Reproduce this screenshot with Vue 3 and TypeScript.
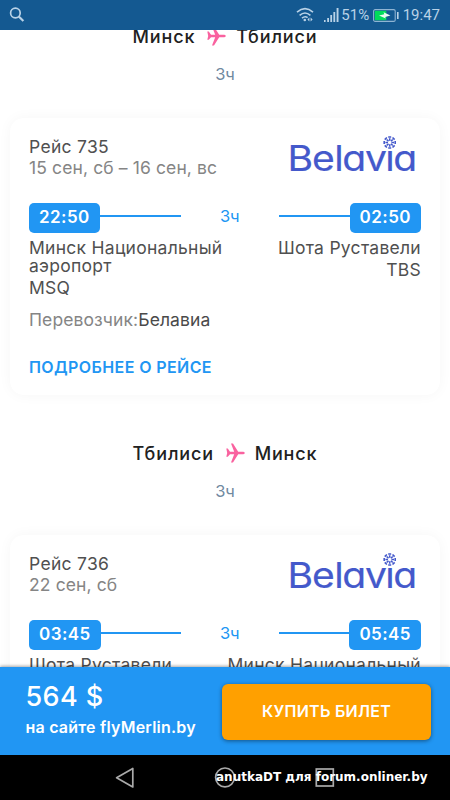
<script setup lang="ts">
interface Flight {
  from: string
  to: string
  number: string
  dates: string
  depart: string
  arrive: string
  origin: string
  originCode: string
  target: string
  targetCode: string
}

const flights: Flight[] = [
  {
    from: 'Минск', to: 'Тбилиси', number: 'Рейс 735', dates: '15 сен, сб – 16 сен, вс',
    depart: '22:50', arrive: '02:50',
    origin: 'Минск Национальный аэропорт', originCode: 'MSQ',
    target: 'Шота Руставели', targetCode: 'TBS',
  },
  {
    from: 'Тбилиси', to: 'Минск', number: 'Рейс 736', dates: '22 сен, сб',
    depart: '03:45', arrive: '05:45',
    origin: 'Шота Руставели', originCode: 'TBS',
    target: 'Минск Национальный аэропорт', targetCode: 'MSQ',
  },
]

const spokes = [0, 45, 90, 135, 180, 225, 270, 315]
</script>

<template>
  <div class="phone">
    <header class="status">
      <svg class="search" width="16" height="16" viewBox="0 0 16 16">
        <circle cx="6.4" cy="6" r="4.8" fill="none" stroke="#b9d2e7" stroke-width="1.7" />
        <path d="M9.8 9.5 14.4 14" stroke="#b9d2e7" stroke-width="2.2" />
      </svg>
      <div class="indicators">
        <svg width="18" height="16" viewBox="0 0 18 16" fill="none" stroke="#b9d2e7" stroke-width="1.6">
          <path d="M1 5.2Q9 -1.8 17 5.2M3.6 8.4Q9 3.6 14.4 8.4M6 11.2Q9 8.6 11.6 10.6" />
          <circle cx="8.8" cy="13" r="1.3" fill="#b9d2e7" stroke="none" />
          <path d="M13.4 10.6 11.4 12.6 13.4 14.6zM14.6 10.6 16.6 12.6 14.6 14.6z" fill="#b9d2e7" stroke="none" />
        </svg>
        <svg class="signal" width="15" height="14" viewBox="0 0 15 14" fill="#b9d2e7">
          <path d="M0 12h1.6v2H0zM3.2 10h1.8v4H3.2zM6.3 7h1.8v7H6.3zM9.4 4h1.8v10H9.4zM12.6 0h1.9v14h-1.9z" />
        </svg>
        <span class="percent">51%</span>
        <svg class="battery" width="26" height="13" viewBox="0 0 26 13">
          <rect x=".6" y=".6" width="21.6" height="11.8" rx="1.5" fill="none" stroke="#8fb4d3" stroke-width="1.1" />
          <rect x="1.8" y="1.8" width="11.5" height="9.4" fill="#00dc5a" />
          <path d="M6 6.6 11.3 5.2 10.6 3.2 17.4 6.4 12.2 7.9 12.8 9.6z" fill="#eafaf2" />
          <rect x="24" y="3" width="1.6" height="7" fill="#b9d2e7" />
        </svg>
        <span class="clock">19:47</span>
      </div>
    </header>

    <main class="content">
      <section v-for="f in flights" :key="f.number" class="leg">
        <h2 class="route">
          <span>{{ f.from }}</span>
          <svg class="plane" width="19" height="20" viewBox="0 0 19 20">
            <path
              d="M.3 5.6H1.8L4 8.8H8.2L5 .6H7L12.2 8.8H17.4Q18.8 9 18.8 10T17.4 11.2H12.2L7 19.4H5L8.2 11.2H4L1.8 13.8H.3L1.2 10z"
              fill="#f9629f"
            />
          </svg>
          <span>{{ f.to }}</span>
        </h2>
        <p class="total">3ч</p>

        <article class="card">
          <div class="top">
            <div>
              <div class="number">{{ f.number }}</div>
              <div class="dates">{{ f.dates }}</div>
            </div>
            <svg class="logo" width="132" height="44" viewBox="0 0 132 44">
              <text
                x="0.4 22.8 42.9 50.2 70.8 89.4 96.7"
                y="40.4"
                transform="scale(1.1 1)"
                class="brand"
              >Belavia</text>
              <circle cx="102.7" cy="12" r="7.5" fill="#fff" />
              <g stroke="#4459cb" stroke-width="1.6" fill="none">
                <g v-for="a in spokes" :key="a" :transform="`translate(102.7 11.5) rotate(${a})`">
                  <path d="M0 -1.7V-4.3M-1.5 -5.5H1.5" />
                </g>
              </g>
            </svg>
          </div>

          <div class="timeline">
            <div class="stop">
              <span class="time">{{ f.depart }}</span>
              <i class="line"></i>
            </div>
            <span class="duration">3ч</span>
            <div class="stop arrival">
              <i class="line"></i>
              <span class="time">{{ f.arrive }}</span>
            </div>
          </div>

          <div class="airports">
            <div class="place">
              <div>{{ f.origin }}</div>
              <div class="code">{{ f.originCode }}</div>
            </div>
            <div class="place end">
              <div>{{ f.target }}</div>
              <div class="code">{{ f.targetCode }}</div>
            </div>
          </div>

          <div class="carrier">Перевозчик:<b>Белавиа</b></div>
          <a class="details">ПОДРОБНЕЕ О РЕЙСЕ</a>
        </article>
      </section>
    </main>

    <footer class="buy">
      <div class="offer">
        <div class="price">564 $</div>
        <div class="site">на сайте flyMerlin.by</div>
      </div>
      <button class="button">КУПИТЬ БИЛЕТ</button>
    </footer>

    <nav class="keys">
      <svg width="450" height="45" viewBox="0 0 450 45" fill="none" stroke="#aaa" stroke-width="1.7">
        <path d="M132.8 13.4V32L116.6 22.7z" stroke-linejoin="round" />
        <circle cx="225" cy="22.4" r="9.4" />
        <rect x="316.3" y="14" width="17" height="17" />
      </svg>
      <span class="mark">anutkaDT для forum.onliner.by</span>
    </nav>
  </div>
</template>

<style>
body {
  margin: 0;
}
</style>

<style scoped>
.phone {
  width: 450px;
  height: 800px;
  display: flex;
  flex-direction: column;
  overflow: hidden;
  background: #fff;
  font-family: Inter, Roboto, sans-serif;
  color: #505050;
}
.status {
  height: 30px;
  flex: none;
  background: #145991;
  display: flex;
  align-items: center;
  justify-content: space-between;
  padding: 0 10px 0 9px;
  box-sizing: border-box;
  font-family: Roboto, sans-serif;
  color: #b9d2e7;
}
.indicators {
  display: flex;
  align-items: center;
}
.signal {
  margin-left: 10.5px;
}
.percent {
  margin-left: 2px;
  font-size: 15px;
}
.battery {
  margin-left: 3.5px;
}
.clock {
  margin-left: 4px;
  font-size: 15px;
}
.content {
  height: 637px;
  flex: none;
  overflow: hidden;
}
.leg {
  height: 417.3px;
  display: flex;
  flex-direction: column;
  position: relative;
  top: -12px;
}
.route {
  margin: 0;
  height: 36px;
  display: flex;
  align-items: center;
  justify-content: center;
  gap: 10.5px;
  font-size: 18px;
  font-weight: 500;
  letter-spacing: 0.85px;
  color: #212121;
}
.plane {
  margin: 0 -0.5px 0 1.3px;
}
.total {
  margin: 10px 0 0;
  line-height: 20px;
  font-size: 16.5px;
  text-align: center;
  color: #7089a0;
}
.card {
  margin: 33.5px 10px 0;
  height: 277px;
  flex: none;
  box-sizing: border-box;
  padding: 18px 19px 0;
  border-radius: 14px;
  background: #fff;
  box-shadow: 0 0 14px rgba(0, 0, 0, 0.04);
  font-size: 17.5px;
}
.top {
  display: flex;
  justify-content: space-between;
  height: 67px;
}
.number {
  line-height: 22px;
  letter-spacing: 0.3px;
}
.dates {
  line-height: 20px;
  letter-spacing: 0.12px;
  color: #858585;
}
.logo {
  margin: -4.5px 2px 0 0;
  overflow: visible;
}
.brand {
  font-family: Inter, sans-serif;
  font-size: 35.5px;
  font-feature-settings: 'cv11';
  fill: #4459cb;
  stroke: #4459cb;
  stroke-width: 0.2;
}
.timeline {
  display: flex;
  align-items: center;
  height: 30px;
}
.stop {
  width: 152px;
  display: flex;
  align-items: center;
}
.arrival {
  width: 142.5px;
}
.time {
  height: 30px;
  padding: 0 10px;
  line-height: 28.5px;
  border-radius: 5px;
  background: #2196f3;
  color: #fff;
  font-size: 17px;
  font-weight: 600;
  letter-spacing: 0.45px;
}
.line {
  height: 2px;
  margin-bottom: 3px;
  background: #2196f3;
  flex: 1;
}
.duration {
  flex: 1;
  padding-bottom: 3px;
  text-align: center;
  color: #2196f3;
  font-size: 16.5px;
}
.airports {
  display: flex;
  justify-content: space-between;
  margin-top: 6px;
  min-height: 59px;
  line-height: 18px;
  letter-spacing: 0.27px;
}
.place {
  width: 196px;
}
.end {
  text-align: right;
}
.code {
  margin-top: 4px;
}
.carrier {
  margin-top: 11.5px;
  line-height: 22px;
  letter-spacing: 0.1px;
  color: #858585;
}
.carrier b {
  font-weight: 400;
  color: #4a4a4a;
}
.details {
  display: block;
  margin-top: 24.5px;
  line-height: 22px;
  font-size: 16px;
  font-weight: 600;
  letter-spacing: 0.4px;
  color: #2196f3;
}
.buy {
  position: relative;
  height: 88px;
  flex: none;
  display: flex;
  justify-content: space-between;
  box-sizing: border-box;
  padding: 17px 19px 0 25.5px;
  background: #2196f3;
  box-shadow: 0 -1px 3px rgba(0, 0, 0, 0.35);
  color: #fff;
}
.price {
  line-height: 26px;
  font-size: 27px;
  font-weight: 500;
  letter-spacing: 0.4px;
}
.site {
  margin-top: 7px;
  line-height: 20px;
  font-size: 16px;
  font-weight: 600;
  letter-spacing: 0.22px;
}
.button {
  width: 209px;
  height: 56px;
  border: 0;
  padding: 0 0 2px;
  border-radius: 6px;
  background: #ffa000;
  box-shadow: 0 1px 4px rgba(0, 0, 0, 0.45);
  color: #fff;
  font: 600 16px/54px Inter, sans-serif;
  letter-spacing: 0.25px;
}
.keys {
  position: relative;
  height: 45px;
  flex: none;
  background: #000;
}
.mark {
  position: absolute;
  left: 216px;
  top: 13px;
  white-space: nowrap;
  font: bold 12px/18px 'DejaVu Sans', sans-serif;
  color: #fff;
}
</style>
